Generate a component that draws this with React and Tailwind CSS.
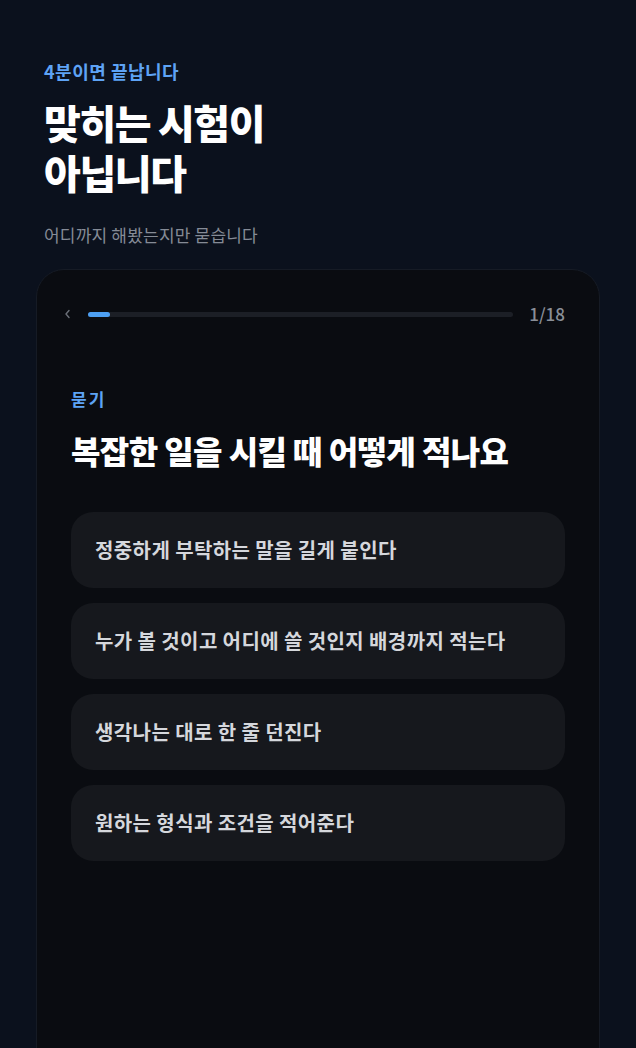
export default function App() {
  const font = { fontFamily: '"Noto Sans CJK KR", "Noto Sans", sans-serif' };
  const options = [
    "정중하게 부탁하는 말을 길게 붙인다",
    "누가 볼 것이고 어디에 쓸 것인지 배경까지 적는다",
    "생각나는 대로 한 줄 던진다",
    "원하는 형식과 조건을 적어준다",
  ];
  return (
    <div className="h-[1048px] w-full overflow-hidden bg-[#0b111d]" style={font}>
      <div className="pl-[44px] pt-[58px]">
        <div className="text-[18px] leading-[26px] font-bold tracking-[0.5px] text-[#5ea3f5]">4분이면 끝납니다</div>
        <h1 className="mt-[13px] text-[40px] leading-[50px] font-black tracking-[-1.4px] text-white">
          맞히는 시험이
          <br />
          아닙니다
        </h1>
        <p className="mt-[25px] text-[17px] leading-[26px] tracking-[0.2px] text-[#858b96]">어디까지 해봤는지만 묻습니다</p>
      </div>
      <div className="mx-[36px] mt-[21px] min-h-[820px] rounded-t-[28px] border border-[#161b25] bg-[#0a0c11] pb-10">
        <div className="flex h-[24px] items-center pl-[27px] pr-[34px] mt-[32px]">
          <svg width="7" height="10" viewBox="0 0 7 10" className="shrink-0">
            <path d="M5 1.5 L2 5 L5 8.5" fill="none" stroke="#6b7079" strokeWidth="1.4" strokeLinecap="round" strokeLinejoin="round" />
          </svg>
          <div className="ml-[17px] h-[5px] flex-1 rounded-full bg-[#1c1f26]">
            <div className="h-[5px] w-[22px] rounded-full bg-[#4d9ff2]" />
          </div>
          <div className="ml-[16px] text-[17px] leading-[24px] font-medium text-[#8a8f98]">1/18</div>
        </div>
        <div className="px-[34px]">
          <div className="mt-[61px] text-[17px] leading-[24px] font-bold tracking-[2px] text-[#5ea3f5]">묻기</div>
          <h2 className="mt-[18px] text-[32px] leading-[42px] font-black tracking-[-0.6px] text-white">
            복잡한 일을 시킬 때 어떻게 적나요
          </h2>
          <div className="mt-[41px] flex flex-col gap-[15px]">
            {options.map((o) => (
              <div
                key={o}
                className="flex h-[76px] items-center rounded-[22px] bg-[#16181d] px-[24px] text-[20px] font-bold tracking-[0.4px] text-[#d5d7dc]"
              >
                {o}
              </div>
            ))}
          </div>
        </div>
      </div>
    </div>
  );
}
